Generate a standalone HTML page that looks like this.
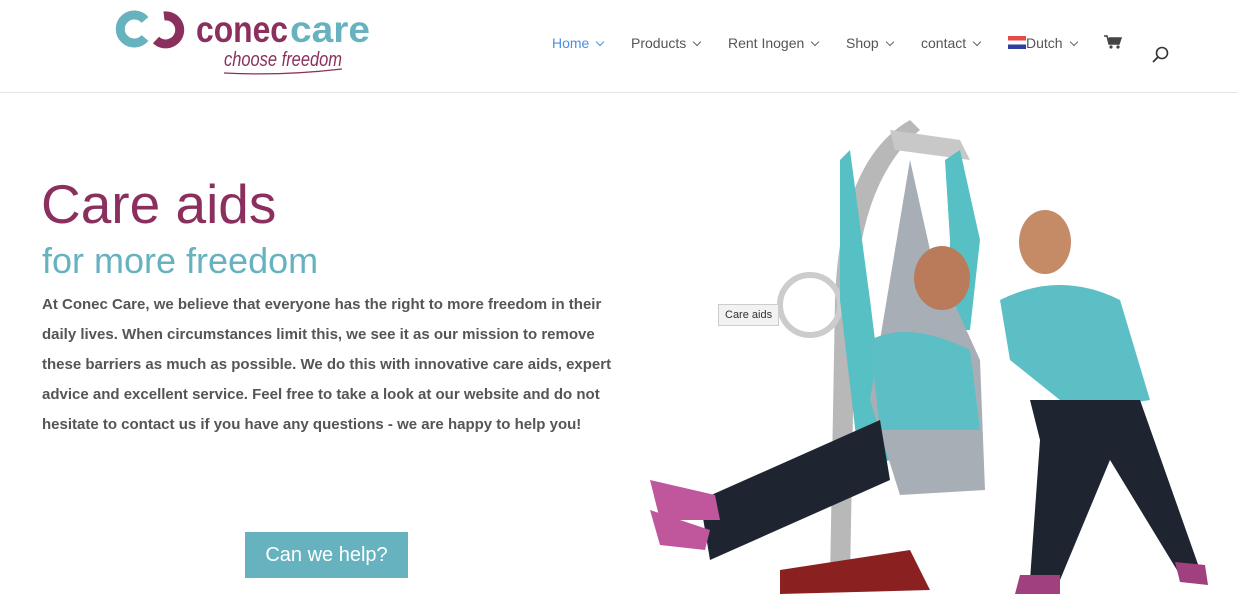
<!DOCTYPE html>
<html><head><meta charset="utf-8"><style>
body{margin:0;width:1238px;height:594px;overflow:hidden;background:#fff;font-family:"Liberation Sans",sans-serif;position:relative}
.hdr{position:absolute;left:0;top:0;width:1238px;height:92px;border-bottom:1px solid #e6e6e6}
.nav{position:absolute;top:35px;font-size:14px;color:#555}
.nav span{position:absolute;white-space:nowrap}
.chev{display:inline-block;width:5px;height:5px;border-right:1.5px solid #666;border-bottom:1.5px solid #666;transform:rotate(45deg);margin-left:8px;position:relative;top:-3px}
h1{position:absolute;left:41px;top:172px;margin:0;font-weight:normal;font-size:55px;color:#8b2f5e}
h2{position:absolute;left:42px;top:240px;margin:0;font-weight:normal;font-size:36px;color:#66b2bf}
p{position:absolute;left:42px;top:290px;width:590px;margin:0;font-size:15px;font-weight:bold;line-height:30px;color:#555}
.btn{position:absolute;left:245px;top:532px;width:163px;height:46px;background:#66b2bf;color:#fff;font-size:20px;text-align:center;line-height:46px}
.tip{position:absolute;left:718px;top:304px;padding:0 6px;height:20px;line-height:20px;font-size:11px;background:#f2f2f2;border:1px solid #ccc;color:#333}
</style></head><body>
<div class="hdr">
<svg style="position:absolute;left:112px;top:6px" width="265" height="72">
<path d="M33 14 A14 14 0 1 0 33 32" fill="none" stroke="#66b2bf" stroke-width="9"/>
<path d="M52 10 A14 14 0 1 1 44 34" fill="none" stroke="#8b2f5e" stroke-width="9"/>
<text x="84" y="36" font-family="Liberation Sans" font-weight="bold" font-size="37" fill="#8b2f5e" textLength="92" lengthAdjust="spacingAndGlyphs">conec</text>
<text x="178" y="36" font-family="Liberation Sans" font-weight="bold" font-size="37" fill="#66b2bf" textLength="80" lengthAdjust="spacingAndGlyphs">care</text>
<text x="112" y="60" font-family="Liberation Sans" font-style="italic" font-size="20" fill="#8b2f5e" textLength="118" lengthAdjust="spacingAndGlyphs">choose freedom</text>
<path d="M112 67 Q170 70 230 63" stroke="#8b2f5e" fill="none" stroke-width="1.2"/>
</svg>
<div class="nav">
<span style="left:552px;color:#4a8fe0">Home<i class="chev" style="border-color:#4a8fe0"></i></span>
<span style="left:631px">Products<i class="chev"></i></span>
<span style="left:728px">Rent Inogen<i class="chev"></i></span>
<span style="left:846px">Shop<i class="chev"></i></span>
<span style="left:921px">contact<i class="chev"></i></span>
<span style="left:1008px"><i style="display:inline-block;width:18px;height:13px;background:linear-gradient(#e84a4a 33%,#fff 33%,#fff 66%,#2f3ea0 66%);vertical-align:-1px"></i>Dutch<i class="chev"></i></span>
</div>
<svg style="position:absolute;left:1104px;top:35px" width="18" height="15"><path d="M0 1h3l2 8h10l2-6H5" fill="#444" stroke="#444" stroke-width="1.5"/><circle cx="7" cy="12" r="1.6" fill="#444"/><circle cx="14" cy="12" r="1.6" fill="#444"/></svg>
<svg style="position:absolute;left:1152px;top:46px" width="18" height="18"><circle cx="10" cy="7" r="5.5" fill="none" stroke="#333" stroke-width="1.6"/><path d="M6 11L1 16" stroke="#333" stroke-width="1.8"/></svg>
</div>
<h1>Care aids</h1>
<h2>for more freedom</h2>
<p>At Conec Care, we believe that everyone has the right to more freedom in their daily lives. When circumstances limit this, we see it as our mission to remove these barriers as much as possible. We do this with innovative care aids, expert advice and excellent service. Feel free to take a look at our website and do not hesitate to contact us if you have any questions - we are happy to help you!</p>
<div class="btn">Can we help?</div>
<svg style="position:absolute;left:640px;top:100px" width="598" height="494">
<path d="M190 480 L195 200 Q200 60 270 20 L280 30 Q220 80 215 200 L210 480Z" fill="#b8b8b8"/>
<path d="M250 30 L320 40 L330 60 L255 50Z" fill="#c8c8c8"/>
<circle cx="170" cy="205" r="30" fill="none" stroke="#ccc" stroke-width="6"/>
<path d="M140 470 L270 450 L290 490 L140 494Z" fill="#8a2020"/>
<path d="M210 50 L230 200 L250 360 L220 370 L200 200 L200 60Z" fill="#56c0c4"/>
<path d="M320 50 L340 140 L330 230 L310 230 L310 140 L305 60Z" fill="#56c0c4"/>
<path d="M270 60 L290 150 L340 260 L345 390 L260 395 L230 300Z" fill="#a8aeb6"/>
<path d="M230 240 Q270 220 330 250 L340 330 L240 330Z" fill="#5cbfc6"/>
<ellipse cx="302" cy="178" rx="28" ry="32" fill="#b97b5a"/>
<path d="M60 400 L240 320 L250 380 L70 460Z" fill="#1f2530"/>
<path d="M10 380 L75 395 L80 420 L20 420Z" fill="#c0579c"/>
<path d="M10 410 L70 430 L65 450 L20 445Z" fill="#c0579c"/>
<path d="M360 200 Q420 170 480 200 L510 300 L450 310 L420 300 L370 260Z" fill="#5cbfc6"/>
<ellipse cx="405" cy="142" rx="26" ry="32" fill="#c58a66"/>
<path d="M390 300 L500 300 L560 470 L540 475 L470 360 L420 480 L390 480 L400 340Z" fill="#1f2530"/>
<path d="M380 475 L420 475 L420 494 L375 494Z" fill="#a0407e"/>
<path d="M535 462 L565 465 L568 485 L540 482Z" fill="#a0407e"/>
</svg>
<div class="tip">Care aids</div>
</body></html>
